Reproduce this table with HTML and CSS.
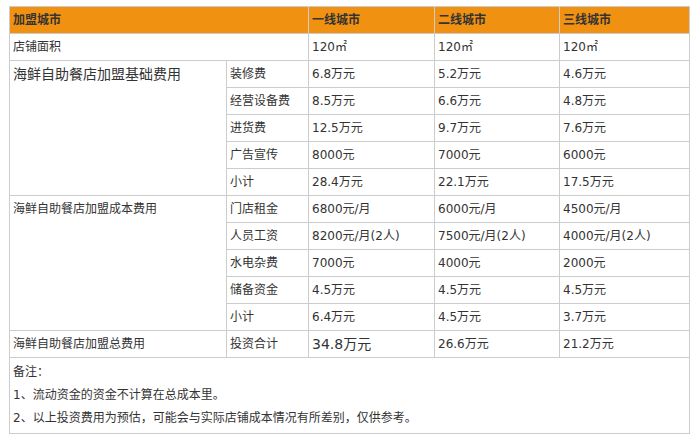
FILE: index.html
```html
<!DOCTYPE html>
<html lang="zh-CN">
<head>
<meta charset="utf-8">
<title>海鲜自助餐店加盟费用</title>
<link rel="stylesheet" href="styles.css">
</head>
<body>
<table class="cost">
  <colgroup>
    <col class="c1"><col class="c2"><col class="c3"><col class="c4"><col class="c5">
  </colgroup>
  <thead>
    <tr class="head">
      <th colspan="2">加盟城市</th>
      <th>一线城市</th>
      <th>二线城市</th>
      <th>三线城市</th>
    </tr>
  </thead>
  <tbody>
    <tr>
      <td colspan="2">店铺面积</td>
      <td>120㎡</td><td>120㎡</td><td>120㎡</td>
    </tr>
    <tr>
      <td rowspan="5" class="group big">海鲜自助餐店加盟基础费用</td>
      <td>装修费</td><td>6.8万元</td><td>5.2万元</td><td>4.6万元</td>
    </tr>
    <tr><td>经营设备费</td><td>8.5万元</td><td>6.6万元</td><td>4.8万元</td></tr>
    <tr><td>进货费</td><td>12.5万元</td><td>9.7万元</td><td>7.6万元</td></tr>
    <tr><td>广告宣传</td><td>8000元</td><td>7000元</td><td>6000元</td></tr>
    <tr><td>小计</td><td>28.4万元</td><td>22.1万元</td><td>17.5万元</td></tr>
    <tr>
      <td rowspan="5" class="group">海鲜自助餐店加盟成本费用</td>
      <td>门店租金</td><td>6800元/月</td><td>6000元/月</td><td>4500元/月</td>
    </tr>
    <tr><td>人员工资</td><td>8200元/月(2人)</td><td>7500元/月(2人)</td><td>4000元/月(2人)</td></tr>
    <tr><td>水电杂费</td><td>7000元</td><td>4000元</td><td>2000元</td></tr>
    <tr><td>储备资金</td><td>4.5万元</td><td>4.5万元</td><td>4.5万元</td></tr>
    <tr><td>小计</td><td>6.4万元</td><td>4.5万元</td><td>3.7万元</td></tr>
    <tr>
      <td>海鲜自助餐店加盟总费用</td>
      <td>投资合计</td><td class="big">34.8万元</td><td>26.6万元</td><td>21.2万元</td>
    </tr>
    <tr>
      <td colspan="5" class="notes">
        <p>备注：</p>
        <p>1、流动资金的资金不计算在总成本里。</p>
        <p>2、以上投资费用为预估，可能会与实际店铺成本情况有所差别，仅供参考。</p>
      </td>
    </tr>
  </tbody>
</table>
</body>
</html>
```

FILE: styles.css
```css
html, body {
  margin: 0;
  background: #ffffff;
}

body {
  padding: 6px 0 0 9px;
  font-family: "DejaVu Sans", "Noto Sans CJK SC", sans-serif;
  font-size: 12px;
  color: #333333;
}

.cost {
  border-collapse: collapse;
  table-layout: fixed;
  width: 680px;
}

.c1 { width: 217px; }
.c2 { width: 82px; }
.c3 { width: 126px; }
.c4 { width: 125px; }
.c5 { width: 130px; }

.cost th,
.cost td {
  border: 1px solid #cccccc;
  padding: 0 2px 0 3px;
  line-height: 26px;
  text-align: left;
  vertical-align: middle;
  white-space: nowrap;
}

.head th {
  background: #f09112;
  font-weight: bold;
  color: #333333;
}

.cost td.group {
  vertical-align: top;
}

.cost td.big {
  font-size: 14px;
}

.cost td.notes {
  padding: 3px 3px;
  line-height: 23px;
}

.notes p {
  margin: 0;
}
```
